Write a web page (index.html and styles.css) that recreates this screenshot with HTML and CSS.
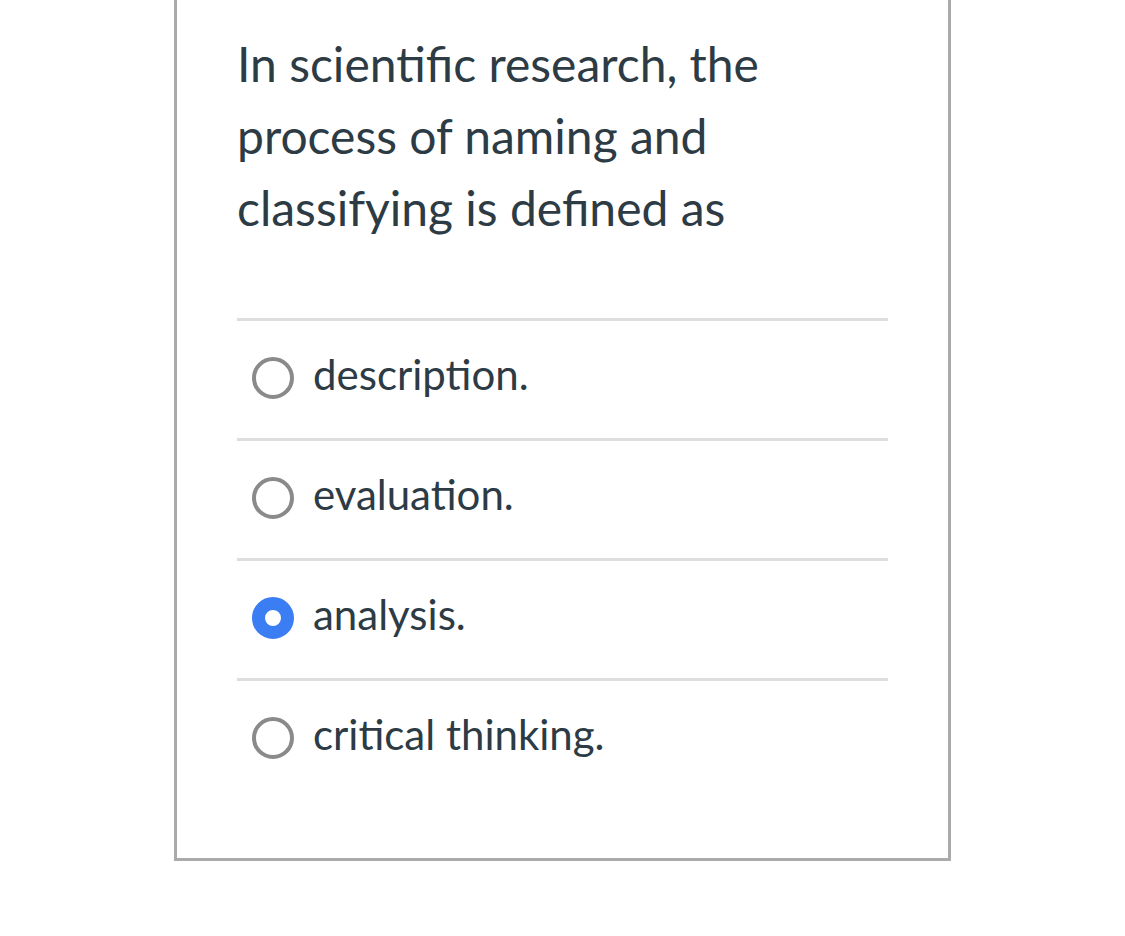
FILE: index.html
```html
<!DOCTYPE html>
<html lang="en">
<head>
<meta charset="utf-8">
<title>Quiz question</title>
<link rel="stylesheet" href="styles.css">
</head>
<body>
<div class="card">
  <p class="question">In scientific research, the process of naming and classifying is defined as</p>
  <ul class="options">
    <li class="option"><span class="radio"></span><span class="label">description.</span></li>
    <li class="option"><span class="radio"></span><span class="label">evaluation.</span></li>
    <li class="option"><span class="radio selected"></span><span class="label">analysis.</span></li>
    <li class="option"><span class="radio"></span><span class="label">critical thinking.</span></li>
  </ul>
</div>
</body>
</html>
```

FILE: styles.css
```css
html, body {
  margin: 0;
  padding: 0;
  background: #ffffff;
}
body {
  font-family: Lato, "Noto Sans", sans-serif;
  color: #2d3b45;
}
.card {
  box-sizing: border-box;
  width: 777px;
  margin-left: 174px;
  border: 3px solid #aaaaaa;
  border-top: none;
  padding: 28px 60px 60px 60px;
}
.question {
  margin: 0;
  font-size: 48px;
  line-height: 72px;
}
.options {
  list-style: none;
  margin: 74px 0 0 0;
  padding: 0;
}
.option {
  box-sizing: border-box;
  display: flex;
  align-items: center;
  height: 120px;
  border-top: 3px solid #dddddd;
  padding: 0 0 3px 15px;
}
.radio {
  box-sizing: border-box;
  flex: none;
  width: 42px;
  height: 42px;
  border-radius: 50%;
  border: 4px solid #8a8a8a;
  background: #ffffff;
}
.radio.selected {
  border: 13px solid #3b7df2;
}
.label {
  margin: 0 0 9px 19px;
  font-size: 42px;
  line-height: 50px;
}
```
